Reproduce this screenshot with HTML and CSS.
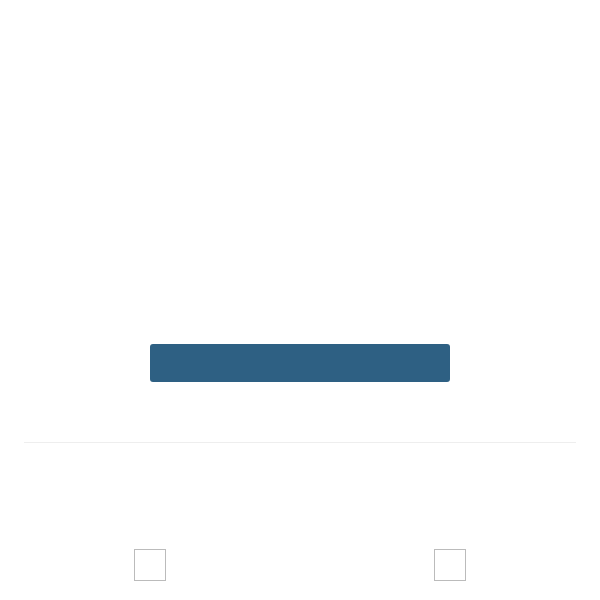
FILE: index.html
```html
<!DOCTYPE html>
<html>
<head>
<meta charset="utf-8">
<link rel="stylesheet" href="styles.css">
</head>
<body>
<div class="page">
  <div class="action">
    <button class="primary-btn" type="button"></button>
  </div>
  <div class="divider"></div>
  <div class="options">
    <div class="option"><span class="box"></span></div>
    <div class="option"><span class="box"></span></div>
  </div>
</div>
</body>
</html>
```
FILE: styles.css
```css
html, body {
  margin: 0;
  padding: 0;
  background: #ffffff;
  font-family: "Liberation Sans", Arial, sans-serif;
}
.page {
  width: 600px;
  height: 600px;
  padding-top: 344px;
  box-sizing: border-box;
  overflow: hidden;
}
.action {
  display: flex;
  justify-content: center;
}
.primary-btn {
  width: 300px;
  height: 38px;
  border: none;
  border-radius: 3px;
  background: #2e6083;
  padding: 0;
  margin: 0;
  display: block;
}
.divider {
  margin: 60px 24px 0;
  height: 1px;
  background: #eeeeee;
}
.options {
  margin-top: 106px;
  display: grid;
  grid-template-columns: 1fr 1fr;
}
.option {
  display: flex;
  justify-content: center;
}
.box {
  display: block;
  width: 32px;
  height: 32px;
  box-sizing: border-box;
  border: 1px solid #bbbbbb;
  background: #ffffff;
}
```
